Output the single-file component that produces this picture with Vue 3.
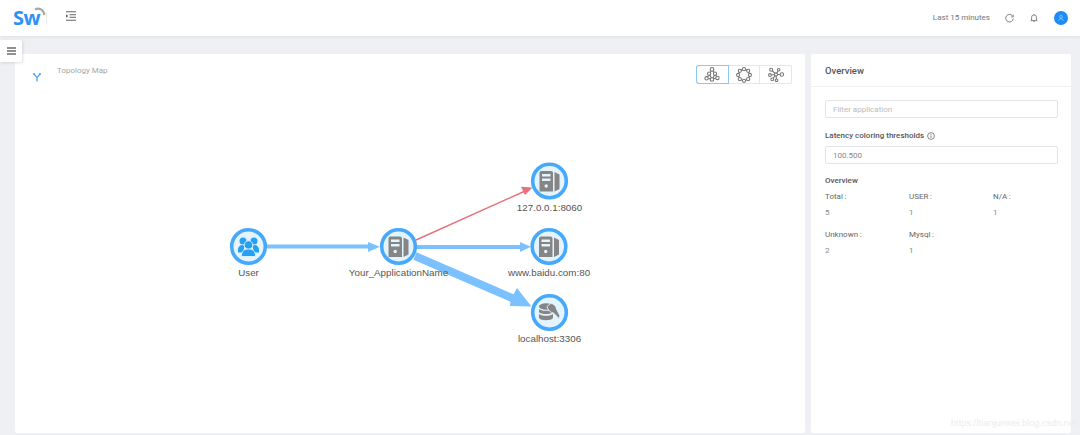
<script setup>
const nodes = [
  { name: 'User', x: 248.5, y: 246.5, type: 'user' },
  { name: 'Your_ApplicationName', x: 398.5, y: 246.5, type: 'server' },
  { name: '127.0.0.1:8060', x: 549.5, y: 181, type: 'server' },
  { name: 'www.baidu.com:80', x: 549, y: 246.5, type: 'server' },
  { name: 'localhost:3306', x: 549.5, y: 312.5, type: 'db' }
]
const stats = [
  ['Total', 5], ['USER', 1], ['N/A', 1], ['Unknown', 2], ['Mysql', 1]
]
</script>

<template>
  <div class="page">
    <header class="top">
      <div class="logo">
        <span class="logo-text">Sw</span>
        <svg class="logo-arc" width="12" height="10" viewBox="0 0 12 10"><path d="M1 2.500C5 .5 9.600 2.300 10.400 8" fill="none" stroke="#a6a6a6" stroke-width="2.200"/></svg>
      </div>
      <span class="divider"></span>
      <svg class="indent" width="10" height="10" viewBox="0 0 10 10"><path d="M0 .7h10M3.500 3.700H10M3.500 6.300H10M0 9.300h10" stroke="#666" stroke-width="1.100"/><path d="M0 3.200 2.400 5 0 6.800z" fill="#666"/></svg>
      <span class="spacer"></span>
      <span class="range">Last 15 minutes</span>
      <svg class="ico-refresh" width="9" height="9" viewBox="0 0 10 10"><path d="M8.700 2.600A4.200 4.200 0 1 0 9.200 5" fill="none" stroke="#666" stroke-width=".9"/><path d="M9.200 .7v2.600H6.600" fill="none" stroke="#666" stroke-width=".8"/></svg>
      <svg class="ico-bell" width="8" height="10" viewBox="0 0 10 11"><path d="M2 8V4.600a3 3 0 0 1 6 0V8l1 .8H1zM4 9.600h2" fill="none" stroke="#666" stroke-width="1"/><path d="M5 .6v1" stroke="#666" stroke-width="1"/></svg>
      <span class="avatar">
        <svg width="6" height="6" viewBox="0 0 6 6"><circle cx="3" cy="1.800" r="1.400" fill="none" stroke="#a9d2ff" stroke-width=".7"/><path d="M.6 5.700c.3-2.500 4.500-2.500 4.800 0" fill="none" stroke="#a9d2ff" stroke-width=".7"/></svg>
      </span>
    </header>

    <main class="body">
      <button class="side-tab" aria-label="menu">
        <svg width="9" height="8" viewBox="0 0 9 8"><path d="M0 1h9M0 4h9M0 7h9" stroke="#222" stroke-width="1.100"/></svg>
      </button>

      <section class="card map">
        <div class="map-head">
          <svg class="y-icon" width="8" height="9" viewBox="0 0 8 9"><path d="M1 1.200 4 4.600l3-3.400M4 4.600V8.500" fill="none" stroke="#3f9cf5" stroke-width="1.200"/><circle cx="1" cy="1" r=".9" fill="#3f9cf5"/><circle cx="7" cy="1" r=".9" fill="#3f9cf5"/></svg>
          <span class="map-title">Topology Map</span>
          <div class="switch">
            <span class="switch-btn active">
              <svg width="16" height="15" viewBox="0 0 15 14" fill="#fff" stroke="#777" stroke-width="1"><path d="M7.500 2.500 5 6.500l2.500 5 3-5zM5 6.500l-2.200 4M7.500 11.500l-4.500-1M7.500 11.500l5-1.500M10.500 6.500l2 3.500" fill="none"/><circle cx="7.500" cy="2.200" r="1.700"/><circle cx="4.800" cy="6.200" r="1.500"/><circle cx="10.300" cy="6.200" r="1.500"/><circle cx="2.400" cy="10.600" r="1.600"/><circle cx="7.500" cy="11.600" r="1.600"/><circle cx="12.600" cy="10.200" r="1.600"/></svg>
            </span>
            <span class="switch-btn">
              <svg width="16" height="16" viewBox="0 0 15 15" fill="#fff" stroke="#777" stroke-width="1"><circle cx="7.500" cy="7.500" r="5.300" fill="none"/><circle cx="7.500" cy="2" r="1.500"/><circle cx="11.400" cy="3.600" r="1.500"/><circle cx="13" cy="7.500" r="1.500"/><circle cx="11.400" cy="11.400" r="1.500"/><circle cx="7.500" cy="13" r="1.500"/><circle cx="3.600" cy="11.400" r="1.500"/><circle cx="2" cy="7.500" r="1.500"/><circle cx="3.600" cy="3.600" r="1.500"/></svg>
            </span>
            <span class="switch-btn">
              <svg width="16" height="15" viewBox="0 0 15 14" fill="#fff" stroke="#777" stroke-width="1"><path d="M7.500 7 3 2.500M7.500 7 1.800 7.500M7.500 7 4 11.500M7.500 7 8 12.500M7.500 7l2.500-4.500M7.500 7h5.500" fill="none"/><circle cx="3" cy="2.500" r="1.400"/><circle cx="1.800" cy="7.500" r="1.300"/><circle cx="4" cy="11.500" r="1.300"/><circle cx="8" cy="12.500" r="1.200"/><circle cx="10" cy="2.500" r="1.200"/><circle cx="13" cy="7" r="1.600"/><circle cx="7.500" cy="7" r="1.500"/></svg>
            </span>
          </div>
        </div>

        <svg class="graph" width="790" height="379" viewBox="15 54 790 379">
          <g fill="#7cc1ff" stroke="none">
            <path d="M266 244.500h102v-2.500l12 4.800-12 5.200v-3.500h-102z"/>
            <path d="M416 245h104v-3l11 4.800-11 5.200v-3h-104z"/>
            <path d="M416.600 252.300 513.600 294.300 517 288 531.500 306.500 510 306 510.400 301.700 413.400 259.700z"/>
          </g>
          <path d="M416 240 524 191.500" fill="none" stroke="#e5727d" stroke-width="1.400"/>
          <path d="M532.500 187.500 521 186.800 525 195z" fill="#e5727d"/>

          <g v-for="n in nodes" :key="n.name">
            <circle :cx="n.x" :cy="n.y" r="16.800" fill="#e3f4ff" stroke="#46a9fb" stroke-width="3.600"/>
            <g v-if="n.type === 'server'" :transform="`translate(${n.x - 10} ${n.y - 10})`">
              <path d="M2 0h9.500a2 2 0 0 1 2 2v18.500H0V2a2 2 0 0 1 2-2z" fill="#858585"/>
              <path d="M2.500 3h8.500v2.400H2.500zM2.500 7.500h8.500v2.400H2.500z" fill="#e3f4ff"/>
              <circle cx="6.700" cy="15" r="1.700" fill="#e3f4ff"/>
              <path d="M15 1 20 3.500v14.500l-5 2.500z" fill="#858585"/>
            </g>
            <g v-else-if="n.type === 'user'" :transform="`translate(${n.x - 10.500} ${n.y - 10})`" fill="#25a0f2">
              <circle cx="5" cy="4.500" r="3.500"/>
              <circle cx="16" cy="4.500" r="3.500"/>
              <path d="M0 15c-.5-4 1.500-6.500 4.500-6.500l2 1L5 16H0zM21 15c.5-4-1.500-6.500-4.500-6.500l-2 1L16 16h5z"/>
              <circle cx="10.500" cy="8.500" r="4.300" stroke="#e3f4ff" stroke-width=".9"/>
              <path d="M3.500 20c-.3-5.500 3-7.500 7-7.500s7.300 2 7 7.500z" stroke="#e3f4ff" stroke-width=".9"/>
            </g>
            <g v-else :transform="`translate(${n.x - 10.500} ${n.y - 9.500})`" fill="#858585">
              <ellipse cx="7" cy="3.500" rx="7" ry="3.300"/>
              <path d="M0 5.700c1.500 2.700 12.500 2.700 14 0v3.300c-1.500 2.700-12.500 2.700-14 0zM0 10.700c1.500 2.700 12.500 2.700 14 0V15c-1.500 3-12.500 3-14 0z"/>
              <path d="M8 3.500 11.500.5c3.500 0 5.500 2.500 6 5.500l3.500 7-1 2.500-5.500-5.500C11 9.500 9 7 8 3.500z" stroke="#e3f4ff" stroke-width=".9"/>
            </g>
            <text class="node-label" :x="n.x" :y="n.y + 29.500" text-anchor="middle">{{ n.name }}</text>
          </g>
        </svg>
      </section>

      <aside class="card panel">
        <h2 class="panel-head">Overview</h2>
        <div class="panel-body">
          <input class="field first" placeholder="Filter application" />
          <div class="label">
            Latency coloring thresholds
            <svg width="8" height="8" viewBox="0 0 8 8"><circle cx="4" cy="4" r="3.400" fill="none" stroke="#555" stroke-width=".7"/><path d="M4 3.400v2.400M4 2v.8" stroke="#555" stroke-width=".8"/></svg>
          </div>
          <input class="field" value="100.500" />
          <div class="label sub">Overview</div>
          <div class="stats">
            <div v-for="s in stats" :key="s[0]" class="stat">
              <div class="stat-key">{{ s[0] }}&#8201;:</div>
              <div class="stat-val">{{ s[1] }}</div>
            </div>
          </div>
        </div>
      </aside>

      <span class="watermark">https://tianjunwei.blog.csdn.net</span>
    </main>
  </div>
</template>

<style>
html, body { margin: 0; background: #eef0f4; overflow: hidden; }
</style>

<style scoped>
.page {
  width: 1080px;
  height: 435px;
  display: flex;
  flex-direction: column;
  background: #eef0f4;
  font-family: Roboto, "Liberation Sans", Arial, sans-serif;
  font-size: 8px;
  color: #666;
  overflow: hidden;
}
.top {
  height: 36px;
  flex: none;
  display: flex;
  align-items: center;
  background: #fff;
  box-shadow: 0 1px 3px rgba(0, 0, 0, .07);
  position: relative;
  z-index: 2;
}
.logo { position: relative; width: 32px; margin-left: 13px; height: 20px; }
.logo-text {
  font: 700 20px/20px "Open Sans", sans-serif;
  color: #2f92f3;
  letter-spacing: -.5px;
}
.logo-arc { position: absolute; left: 21px; top: -1px; }
.divider { width: 1px; height: 12px; background: #eee; margin-left: 1px; }
.indent { margin-left: 19px; margin-top: -4px; }
.spacer { flex: 1; }
.range { color: #777; margin-right: 14.500px; margin-top: -1px; }
.ico-refresh { margin-right: 16.500px; }
.ico-bell { margin-right: 16px; }
.avatar {
  width: 14px;
  height: 14px;
  border-radius: 50%;
  background: #1e8cf5;
  display: flex;
  align-items: center;
  justify-content: center;
  margin-right: 12px;
}
.body {
  flex: 1;
  position: relative;
  display: flex;
  gap: 6px;
  padding: 18px 9px 2px 15px;
  min-height: 0;
}
.side-tab {
  position: absolute;
  left: 0;
  top: 4px;
  width: 22px;
  height: 22px;
  padding: 0;
  border: 0;
  background: #fff;
  border-radius: 0 2px 2px 0;
  box-shadow: 1px 1px 3px rgba(0, 0, 0, .12);
  display: flex;
  align-items: center;
  justify-content: center;
  z-index: 1;
}
.card { background: #fff; border-radius: 2px; }
.map { width: 790px; position: relative; }
.map-head { position: relative; z-index: 1; height: 40px; }
.y-icon { position: absolute; left: 18px; top: 19px; }
.map-title { position: absolute; left: 42px; top: 12px; color: #a6a6a6; }
.switch {
  position: absolute;
  left: 681px;
  top: 11px;
  display: flex;
  height: 19px;
  border: 1px solid #e4e6ea;
  border-radius: 2px;
  box-sizing: border-box;
  width: 96px;
}
.switch-btn {
  flex: 1;
  display: flex;
  align-items: center;
  justify-content: center;
  border-left: 1px solid #e4e6ea;
}
.switch-btn:first-child { border-left: 0; }
.switch-btn.active {
  box-shadow: 0 0 0 1px #8ec5fb;
  border-radius: 2px 0 0 2px;
  position: relative;
}
.graph { position: absolute; left: 0; top: 0; }
.node-label { font-size: 9.800px; fill: #555; font-family: "Liberation Sans", sans-serif; }
.panel { width: 260px; display: flex; flex-direction: column; }
.panel-head {
  margin: 0;
  height: 32px;
  line-height: 33px;
  padding-left: 14px;
  font-size: 9.500px;
  font-weight: 500;
  color: #555;
  border-bottom: 1px solid #eef0f3;
}
.panel-body { padding: 13px 14px; display: flex; flex-direction: column; }
.field {
  box-sizing: border-box;
  width: 233px;
  height: 18px;
  padding: 0 7px;
  border: 1px solid #e2e4e8;
  border-radius: 2px;
  outline: 0;
  font: 8px Roboto, sans-serif;
  color: #888;
  background: #fff;
}
.field::placeholder { color: #bbb; }
.label {
  display: flex;
  align-items: center;
  gap: 3px;
  font-weight: 500;
  color: #555;
  margin: 12px 0 4px;
  height: 12px;
  line-height: 12px;
}
.label.sub { margin: 11px 0 3px; }
.stats { display: grid; grid-template-columns: 84px 84px 64px; row-gap: 8px; }
.stat-key { line-height: 14px; color: #666; }
.stat-val { line-height: 14px; margin-top: 2px; color: #888; }
.watermark {
  position: absolute;
  left: 951px;
  top: 382px;
  font: 9.200px "Liberation Sans", sans-serif;
  color: #ececee;
  white-space: nowrap;
}
</style>
